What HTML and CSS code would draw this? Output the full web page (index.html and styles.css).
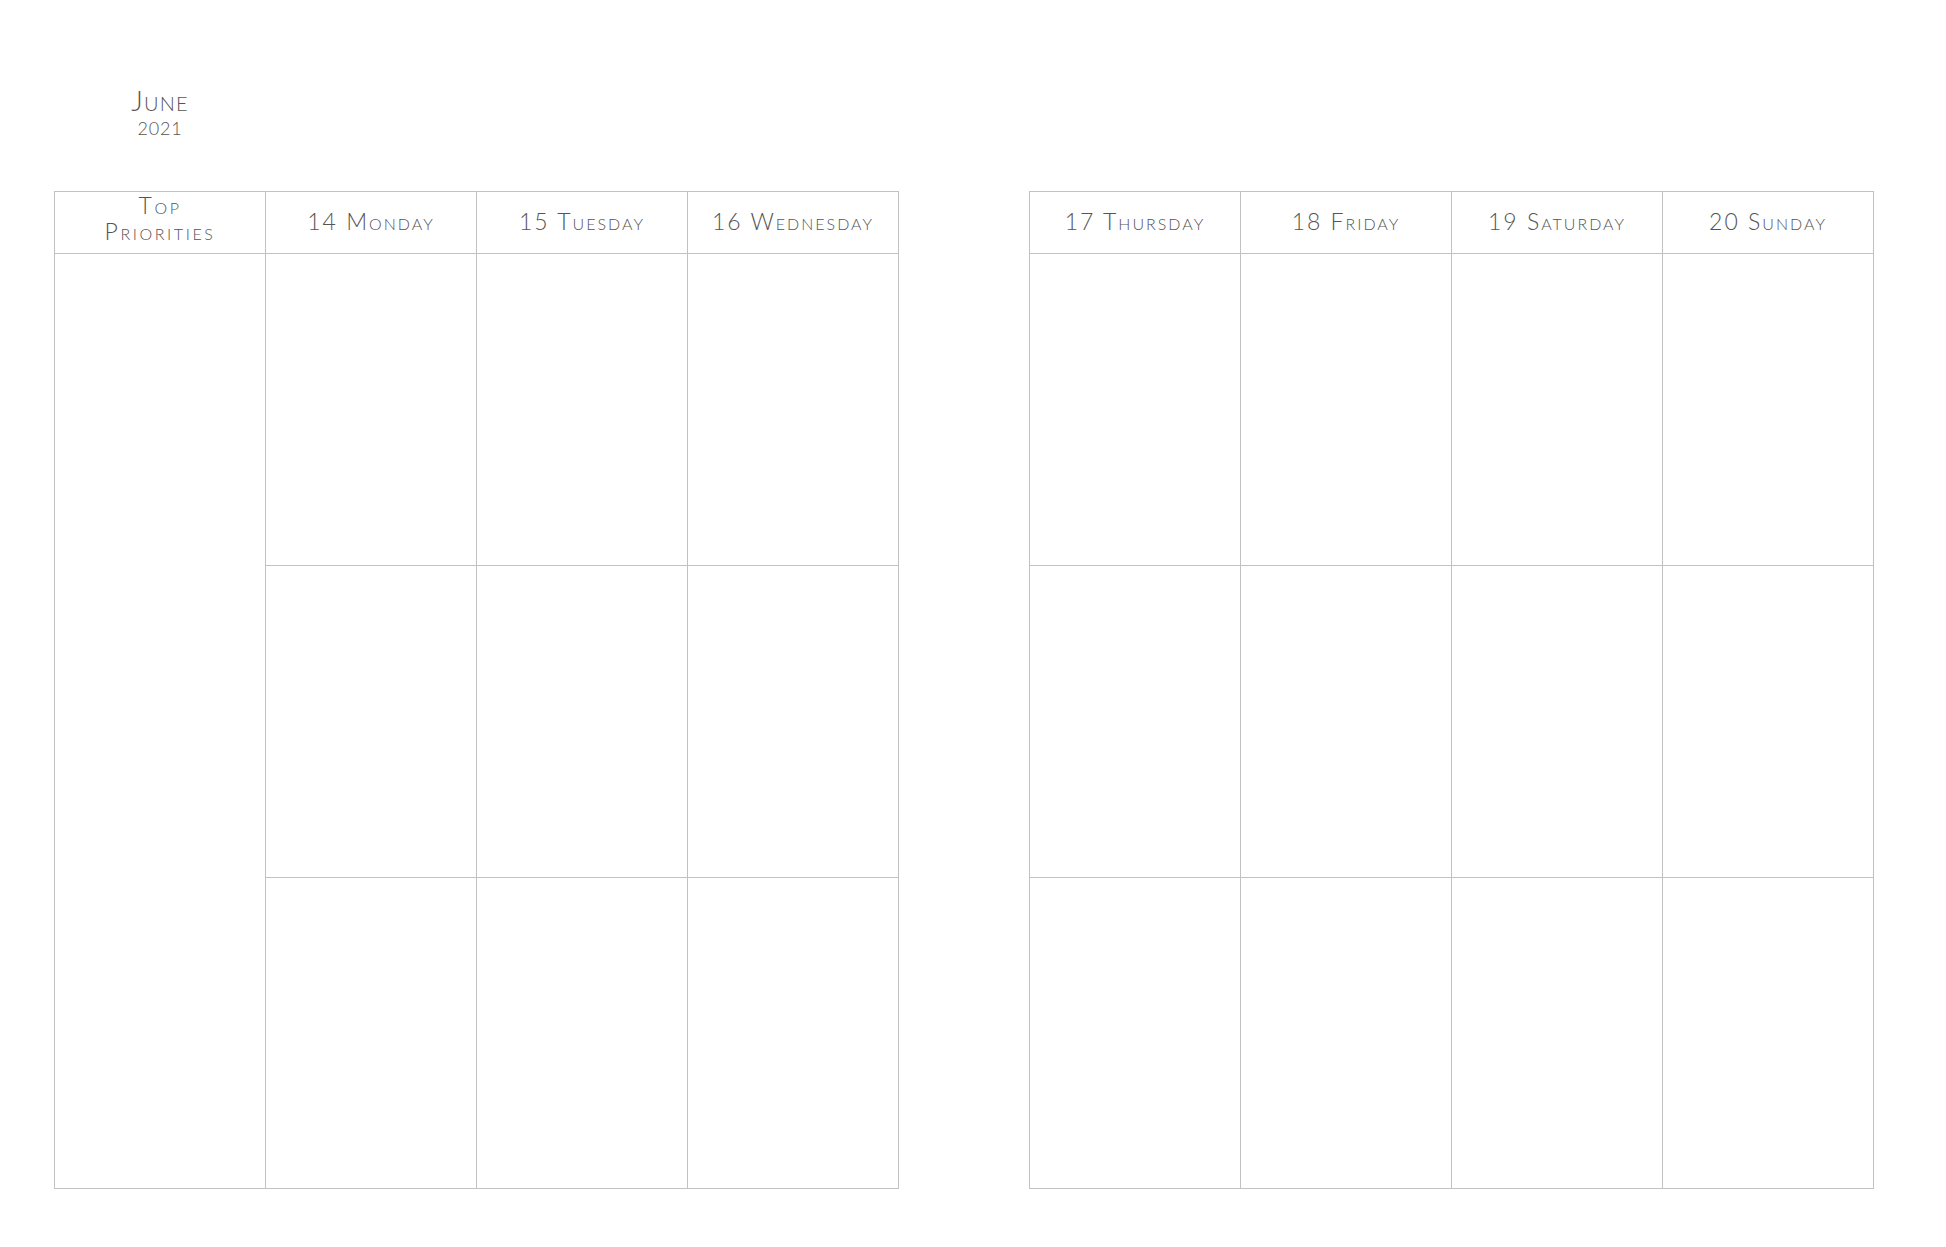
FILE: index.html
```html
<!DOCTYPE html>
<html lang="en">
<head>
    <meta charset="UTF-8">
    <meta name="viewport" content="width=device-width, initial-scale=1.0">
    <title>Weekly Planner - June 2021</title>
    <link rel="stylesheet" href="styles.css">
</head>
<body>

    <div class="page">
        <div class="title">
            <div class="month">June</div>
            <div class="year">2021</div>
        </div>

        <div class="spread">
            <!-- Left page -->
            <div class="week">
                <div class="head two-line">Top<br>Priorities</div>
                <div class="head">14 Monday</div>
                <div class="head">15 Tuesday</div>
                <div class="head">16 Wednesday</div>

                <div class="cell priorities"></div>
                <div class="cell"></div>
                <div class="cell"></div>
                <div class="cell"></div>
                <div class="cell"></div>
                <div class="cell"></div>
                <div class="cell"></div>
                <div class="cell"></div>
                <div class="cell"></div>
                <div class="cell"></div>
            </div>

            <!-- Right page -->
            <div class="week">
                <div class="head">17 Thursday</div>
                <div class="head">18 Friday</div>
                <div class="head">19 Saturday</div>
                <div class="head">20 Sunday</div>

                <div class="cell"></div>
                <div class="cell"></div>
                <div class="cell"></div>
                <div class="cell"></div>
                <div class="cell"></div>
                <div class="cell"></div>
                <div class="cell"></div>
                <div class="cell"></div>
                <div class="cell"></div>
                <div class="cell"></div>
                <div class="cell"></div>
                <div class="cell"></div>
            </div>
        </div>
    </div>

</body>
</html>
```

FILE: styles.css
```css
body {
    font-family: Lato, "Open Sans", sans-serif;
    font-weight: 300;
    background-color: #fff;
    color: #555;
    margin: 0;
    padding: 0;
}
.page {
    padding: 85px 54px 0 54px;
}
.title {
    width: 212px;
    text-align: center;
    font-variant: small-caps;
    margin-bottom: 51px;
}
.month {
    font-size: 28px;
    line-height: 31px;
    letter-spacing: 1.2px;
}
.year {
    font-size: 18px;
    line-height: 24px;
    letter-spacing: 0.8px;
}
.spread {
    display: flex;
    gap: 130px;
}
.week {
    display: grid;
    grid-template-columns: repeat(4, 211px);
    grid-template-rows: 62px 312px 312px 311px;
    border-top: 1px solid #c2c2c2;
    border-left: 1px solid #c2c2c2;
}
.head,
.cell {
    border-right: 1px solid #c2c2c2;
    border-bottom: 1px solid #c2c2c2;
}
.head {
    display: flex;
    align-items: center;
    justify-content: center;
    text-align: center;
    font-size: 23px;
    line-height: 24px;
    letter-spacing: 2px;
    font-variant: small-caps;
    padding-bottom: 3px;
}
.two-line {
    line-height: 26px;
    letter-spacing: 2.6px;
    padding-bottom: 9px;
}
.priorities {
    grid-row: span 3;
}
```
